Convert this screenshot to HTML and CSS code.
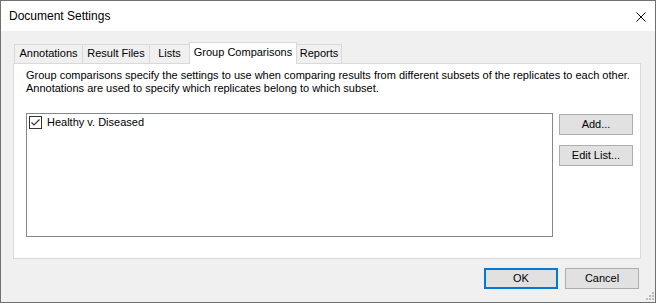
FILE: index.html
```html
<!DOCTYPE html>
<html>
<head>
<meta charset="utf-8">
<link rel="stylesheet" href="styles.css">
</head>
<body>
<div class="window">
  <div class="titlebar">
    <span class="title">Document Settings</span>
    <svg class="close" width="10" height="10" viewBox="0 0 10 10"><path d="M0.5 0.5 L9.5 9.5 M9.5 0.5 L0.5 9.5" stroke="#000" stroke-width="1" fill="none"/></svg>
  </div>
  <div class="client">
    <div class="tabs">
      <div class="tab tab-annotations">Annotations</div>
      <div class="tab tab-results">Result Files</div>
      <div class="tab tab-lists">Lists</div>
      <div class="tab tab-group selected">Group Comparisons</div>
      <div class="tab tab-reports">Reports</div>
    </div>
    <div class="panel">
      <p class="desc">Group comparisons specify the settings to use when comparing results from different subsets of the replicates to each other.<br>Annotations are used to specify which replicates belong to which subset.</p>
      <div class="list-row">
        <div class="listbox">
          <div class="item">
            <span class="check"><svg width="11" height="11" viewBox="0 0 11 11"><path d="M1.5 5.5 L4 8 L9.5 2.5" stroke="#333" stroke-width="1.2" fill="none"/></svg></span>
            <span class="item-label">Healthy v. Diseased</span>
          </div>
        </div>
        <div class="side-buttons">
          <button class="btn">Add...</button>
          <button class="btn">Edit List...</button>
        </div>
      </div>
    </div>
    <div class="footer">
      <button class="btn default">OK</button>
      <button class="btn">Cancel</button>
    </div>
    <svg class="grip" width="8" height="8" viewBox="0 0 8 8">
      <rect x="6" y="0" width="2" height="2" fill="#bcbcbc"/>
      <rect x="3" y="3" width="2" height="2" fill="#bcbcbc"/>
      <rect x="6" y="3" width="2" height="2" fill="#bcbcbc"/>
      <rect x="0" y="6" width="2" height="2" fill="#bcbcbc"/>
      <rect x="3" y="6" width="2" height="2" fill="#bcbcbc"/>
      <rect x="6" y="6" width="2" height="2" fill="#bcbcbc"/>
    </svg>
  </div>
</div>
</body>
</html>
```

FILE: styles.css
```css
* { box-sizing: border-box; }
html, body { margin: 0; padding: 0; }
body {
  width: 656px;
  height: 303px;
  font-family: "Liberation Sans", Arial, sans-serif;
  font-size: 11px;
  color: #000;
  background: #fff;
}
.window {
  width: 656px;
  height: 303px;
  border: 1px solid #707070;
  display: flex;
  flex-direction: column;
}
.titlebar {
  height: 30px;
  background: #fff;
  display: flex;
  align-items: center;
  justify-content: space-between;
  padding: 0 9px 0 8px;
}
.title {
  font-size: 12px;
  line-height: 30px;
}
.close { display: block; margin-top: 1px; }
.client {
  position: relative;
  flex: 1;
  background: #f0f0f0;
  padding: 11px 16px 13px 12px;
  display: flex;
  flex-direction: column;
}
.tabs {
  display: flex;
  align-items: flex-end;
  height: 21px;
  padding-left: 1px;
}
.tab {
  height: 19px;
  border: 1px solid #d9d9d9;
  border-bottom: none;
  background: #f0f0f0;
  text-align: center;
  line-height: 17px;
  white-space: nowrap;
  margin-left: -1px;
}
.tab-annotations { width: 69px; margin-left: 0; }
.tab-results { width: 68px; }
.tab-lists { width: 41px; }
.tab-group { width: 108px; }
.tab-reports { width: 46px; }
.tab.selected {
  height: 22px;
  background: #fff;
  margin-bottom: -1px;
  position: relative;
  z-index: 1;
  line-height: 18px;
}
.panel {
  width: 628px;
  height: 196px;
  border: 1px solid #d9d9d9;
  background: #fff;
  padding: 5px 0 0 12px;
}
.desc {
  margin: 0;
  line-height: 13px;
  white-space: nowrap;
}
.list-row {
  display: flex;
  margin-top: 18px;
}
.listbox {
  width: 527px;
  height: 124px;
  border: 1px solid #828790;
  background: #fff;
  padding: 2px 0 0 2px;
}
.item {
  display: flex;
  align-items: center;
  height: 13px;
}
.check {
  width: 13px;
  height: 13px;
  border: 1px solid #333;
  background: #fff;
  display: flex;
  align-items: center;
  justify-content: center;
}
.check svg { display: block; }
.item-label {
  margin-left: 5px;
  line-height: 13px;
}
.side-buttons {
  display: flex;
  flex-direction: column;
  gap: 10px;
  margin-left: 6px;
  margin-top: 1px;
}
.btn {
  width: 74px;
  height: 21px;
  border: 1px solid #adadad;
  background: #e1e1e1;
  font-family: "Liberation Sans", Arial, sans-serif;
  font-size: 11px;
  color: #000;
  padding: 0;
  margin: 0;
  line-height: 19px;
  text-align: center;
}
.btn.default {
  border: 2px solid #0078d7;
  line-height: 17px;
}
.footer {
  display: flex;
  justify-content: flex-end;
  gap: 7px;
  margin-top: 9px;
  padding-right: 0;
}
.grip {
  position: absolute;
  right: 1px;
  bottom: 2px;
}
```
